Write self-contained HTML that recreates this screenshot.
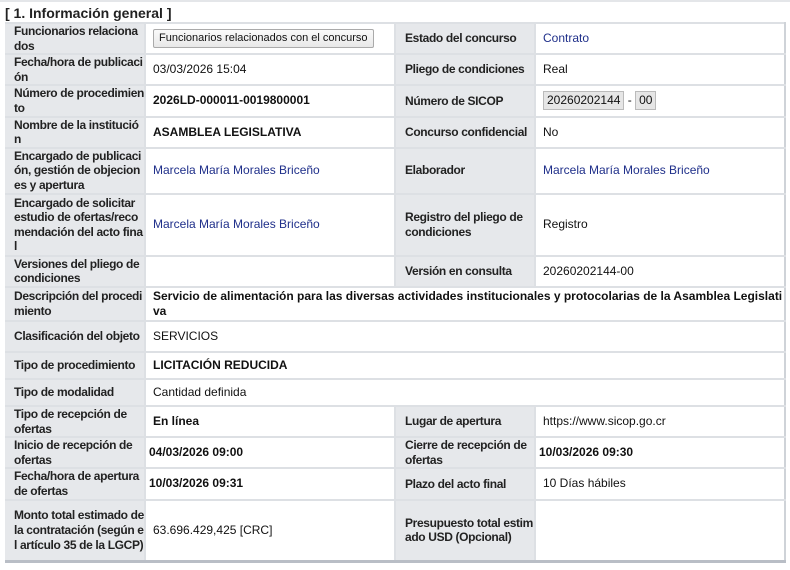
<!DOCTYPE html>
<html><head><meta charset="utf-8"><style>
body{margin:0;background:#fff;font-family:"Liberation Sans",Arial,sans-serif;font-size:12px;color:#111;}
.wrap{position:relative;width:790px;height:570px;overflow:hidden;}
.topline{position:absolute;left:0;top:0;width:790px;height:2px;background:#e4e6e9;}
h1{position:absolute;left:5px;top:5px;margin:0;font-size:14px;font-weight:bold;color:#222;}
table{position:absolute;left:5px;top:22px;width:780px;border-collapse:collapse;table-layout:fixed;border-top:2px solid #5b7491;border-bottom:3px solid #b9bec6;}
td{border:2px solid #dde0e4;padding:0 0 0 7px;vertical-align:middle;line-height:15px;word-break:break-all;}
td.l{background:#e6e8eb;font-weight:bold;padding:0 0 0 9px;color:#222;letter-spacing:-0.35px;line-height:14.6px;}
td:first-child{border-left:none;}
td:last-child{border-right:2px solid #cfd3d8;}
.b{font-weight:bold;}
a{color:#1f2f8a;text-decoration:none;}
.btn{display:inline-block;border:1px solid #aaa;border-radius:2px;background:linear-gradient(#fafafa,#e8e8e8);padding:2px 5px;font-size:11px;line-height:13px;}
.box{display:inline-block;border:1px solid #bbb;background:#e6e6e6;padding:1px 3px;}
</style></head><body><div class="wrap">
<div class="topline"></div>
<h1>[ 1. Información general ]</h1>
<table>
<colgroup><col style="width:140px"><col style="width:250px"><col style="width:140px"><col style="width:250px"></colgroup>
<tr style="height:31px"><td class="l">Funcionarios relacionados</td><td><span class="btn">Funcionarios relacionados con el concurso</span></td><td class="l">Estado del concurso</td><td><a>Contrato</a></td></tr>
<tr style="height:31px"><td class="l">Fecha/hora de publicación</td><td>03/03/2026 15:04</td><td class="l">Pliego de condiciones</td><td>Real</td></tr>
<tr style="height:31px"><td class="l">Número de procedimiento</td><td class="b">2026LD-000011-0019800001</td><td class="l">Número de SICOP</td><td><span class="box">20260202144</span> - <span class="box">00</span></td></tr>
<tr style="height:31px"><td class="l">Nombre de la institución</td><td class="b">ASAMBLEA LEGISLATIVA</td><td class="l" style="white-space:nowrap">Concurso confidencial</td><td>No</td></tr>
<tr style="height:46px"><td class="l">Encargado de publicación, gestión de objeciones y apertura</td><td><a>Marcela María Morales Briceño</a></td><td class="l">Elaborador</td><td><a>Marcela María Morales Briceño</a></td></tr>
<tr style="height:62px"><td class="l">Encargado de solicitar estudio de ofertas/recomendación del acto final</td><td><a>Marcela María Morales Briceño</a></td><td class="l" style="word-break:normal">Registro del pliego de condiciones</td><td>Registro</td></tr>
<tr style="height:31px"><td class="l">Versiones del pliego de condiciones</td><td></td><td class="l">Versión en consulta</td><td>20260202144-00</td></tr>
<tr style="height:34px"><td class="l">Descripción del procedimiento</td><td colspan="3" class="b">Servicio de alimentación para las diversas actividades institucionales y protocolarias de la Asamblea Legislativa</td></tr>
<tr style="height:31px"><td class="l">Clasificación del objeto</td><td colspan="3">SERVICIOS</td></tr>
<tr style="height:27px"><td class="l">Tipo de procedimiento</td><td colspan="3" class="b">LICITACIÓN REDUCIDA</td></tr>
<tr style="height:27px"><td class="l">Tipo de modalidad</td><td colspan="3">Cantidad definida</td></tr>
<tr style="height:31px"><td class="l" style="word-break:normal">Tipo de recepción de ofertas</td><td class="b">En línea</td><td class="l">Lugar de apertura</td><td>https://www.sicop.go.cr</td></tr>
<tr style="height:31px"><td class="l" style="word-break:normal">Inicio de recepción de ofertas</td><td class="b" style="padding-left:3px">04/03/2026 09:00</td><td class="l" style="word-break:normal">Cierre de recepción de ofertas</td><td class="b" style="padding-left:3px">10/03/2026 09:30</td></tr>
<tr style="height:31px"><td class="l">Fecha/hora de apertura de ofertas</td><td class="b" style="padding-left:3px">10/03/2026 09:31</td><td class="l">Plazo del acto final</td><td>10 Días hábiles</td></tr>
<tr style="height:62px"><td class="l">Monto total estimado de la contratación (según el artículo 35 de la LGCP)</td><td>63.696.429,425 [CRC]</td><td class="l">Presupuesto total estimado USD (Opcional)</td><td></td></tr>
</table>
</div></body></html>
